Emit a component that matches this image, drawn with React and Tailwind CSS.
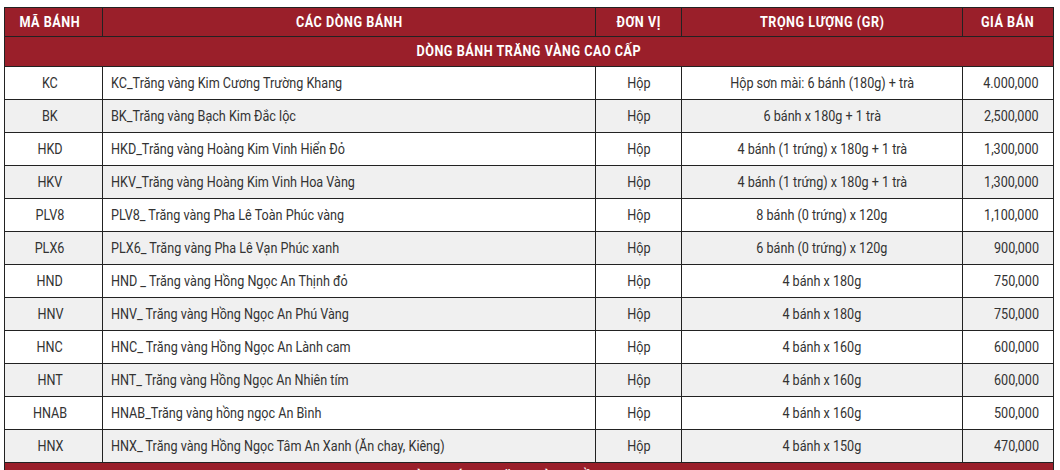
import React from "react";

const rows = [
  ["KC", "KC_Trăng vàng Kim Cương Trường Khang", "Hộp", "Hộp sơn mài: 6 bánh (180g) + trà", "4.000,000"],
  ["BK", "BK_Trăng vàng Bạch Kim Đắc lộc", "Hộp", "6 bánh x 180g + 1 trà", "2,500,000"],
  ["HKD", "HKD_Trăng vàng Hoàng Kim Vinh Hiển Đỏ", "Hộp", "4 bánh (1 trứng) x 180g + 1 trà", "1,300,000"],
  ["HKV", "HKV_Trăng vàng Hoàng Kim Vinh Hoa Vàng", "Hộp", "4 bánh (1 trứng) x 180g + 1 trà", "1,300,000"],
  ["PLV8", "PLV8_ Trăng vàng Pha Lê Toàn Phúc vàng", "Hộp", "8 bánh (0 trứng) x 120g", "1,100,000"],
  ["PLX6", "PLX6_ Trăng vàng Pha Lê Vạn Phúc xanh", "Hộp", "6 bánh (0 trứng) x 120g", "900,000"],
  ["HND", "HND _ Trăng vàng Hồng Ngọc An Thịnh đỏ", "Hộp", "4 bánh x 180g", "750,000"],
  ["HNV", "HNV_ Trăng vàng Hồng Ngọc An Phú Vàng", "Hộp", "4 bánh x 180g", "750,000"],
  ["HNC", "HNC_ Trăng vàng Hồng Ngọc An Lành cam", "Hộp", "4 bánh x 160g", "600,000"],
  ["HNT", "HNT_ Trăng vàng Hồng Ngọc An Nhiên tím", "Hộp", "4 bánh x 160g", "600,000"],
  ["HNAB", "HNAB_Trăng vàng hồng ngọc An Bình", "Hộp", "4 bánh x 160g", "500,000"],
  ["HNX", "HNX_ Trăng vàng Hồng Ngọc Tâm An Xanh (Ăn chay, Kiêng)", "Hộp", "4 bánh x 150g", "470,000"],
];

const font = { fontFamily: '"Roboto", "Liberation Sans", sans-serif' };

const C = ({ children }) => <span className="inline-block scale-x-[0.9] origin-center whitespace-nowrap">{children}</span>;
const L = ({ children }) => <span className="inline-block scale-x-[0.9] origin-left whitespace-nowrap">{children}</span>;
const R = ({ children }) => <span className="inline-block scale-x-[0.9] origin-right whitespace-nowrap">{children}</span>;

export default function App() {
  return (
    <div className="bg-white w-[1060px] h-[470px] overflow-hidden pt-[7px] pl-[4px]" style={font}>
      <table className="border-collapse table-fixed w-[1049px] text-[14px] text-[#333]">
        <colgroup>
          <col className="w-[98px]" />
          <col className="w-[493px]" />
          <col className="w-[86px]" />
          <col className="w-[281px]" />
          <col className="w-[91px]" />
        </colgroup>
        <thead>
          <tr className="bg-[#9a1f2a] text-white uppercase tracking-[0.6px] h-[29px]">
            <th className="border border-[#222] text-center pr-[7px] font-bold"><C>Mã Bánh</C></th>
            <th className="border border-[#222] text-center font-bold"><C>Các dòng bánh</C></th>
            <th className="border border-[#222] text-center font-bold"><C>Đơn vị</C></th>
            <th className="border border-[#222] text-center font-bold"><C>Trọng lượng (gr)</C></th>
            <th className="border border-[#222] text-center font-bold"><C>Giá bán</C></th>
          </tr>
        </thead>
        <tbody>
          <tr className="bg-[#9a1f2a] text-white h-[30px]">
            <td colSpan={5} className="border border-[#222] text-center font-bold uppercase tracking-[0.6px]">
              <C>Dòng bánh trăng vàng cao cấp</C>
            </td>
          </tr>
          {rows.map((r, i) => (
            <tr key={r[0]} className={(i % 2 === 1 ? "bg-[#f0f0f0]" : "bg-white") + " h-[33px]"}>
              <td className="border border-[#222] text-center pr-[7px]"><C>{r[0]}</C></td>
              <td className="border border-[#222] pl-[8px]"><L>{r[1]}</L></td>
              <td className="border border-[#222] text-center"><C>{r[2]}</C></td>
              <td className="border border-[#222] text-center"><C>{r[3]}</C></td>
              <td className="border border-[#222] text-right pr-[14px]"><R>{r[4]}</R></td>
            </tr>
          ))}
          <tr className="bg-[#9a1f2a] text-white h-[30px]">
            <td colSpan={5} className="border border-[#222] text-center font-bold uppercase tracking-[0.6px]">
              <C>Dòng bánh trăng vàng hồng ngọc</C>
            </td>
          </tr>
        </tbody>
      </table>
    </div>
  );
}
